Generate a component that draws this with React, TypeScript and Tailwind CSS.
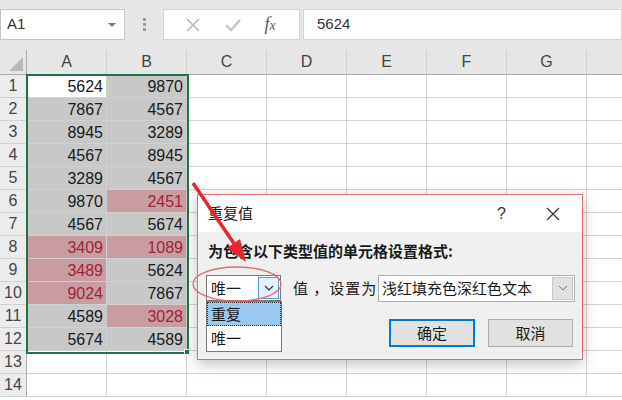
import React from 'react'

const colA = [5624, 7867, 8945, 4567, 3289, 9870, 4567, 3409, 3489, 9024, 4589, 5674]
const colB = [9870, 4567, 3289, 8945, 4567, 2451, 5674, 1089, 5624, 7867, 3028, 4589]
const pinkA = [7, 8, 9]
const pinkB = [5, 7, 10]
const letters = ['A', 'B', 'C', 'D', 'E', 'F', 'G']

const num = { fontFamily: '"Liberation Sans", Arial, sans-serif' }
const cjk = { fontFamily: '"Noto Sans CJK SC", "Noto Sans", sans-serif' }

function DataCell({ value, pink, active }: { value: number; pink: boolean; active?: boolean }) {
  const bg = active ? 'bg-white' : pink ? 'bg-[#c89ca1]' : 'bg-[#c8c8c8]'
  return (
    <div
      className={`h-[23px] border-r border-b border-[#d0d0d0] ${bg} ${pink ? 'text-[#9d2536]' : 'text-[#1a1a1a]'} text-right pr-[3px] text-[16px] leading-[23px]`}
      style={num}
    >
      {value}
    </div>
  )
}

export default function App() {
  const rows = Array.from({ length: 14 }, (_, i) => i)

  return (
    <div className="relative w-[622px] h-[400px] overflow-hidden bg-white select-none">
      {/* formula bar */}
      <div className="h-[50px] bg-[#e6e6e6] flex items-start pt-[9px]">
        <div className="w-[125px] h-[31px] bg-white border border-[#c6c6c6] flex items-center justify-between pl-[6px] pr-[8px]">
          <span className="text-[15px] text-[#333]" style={num}>A1</span>
          <span className="w-0 h-0 border-l-[4px] border-r-[4px] border-t-[4px] border-l-transparent border-r-transparent border-t-[#777]" />
        </div>
        <div className="w-[38px] h-[31px] flex flex-col items-center justify-center gap-[2px]">
          <span className="w-[3px] h-[3px] bg-[#9a9a9a]" />
          <span className="w-[3px] h-[3px] bg-[#9a9a9a]" />
          <span className="w-[3px] h-[3px] bg-[#9a9a9a]" />
        </div>
        <div className="w-[137px] h-[31px] bg-white border border-[#d4d4d4] flex items-center justify-around px-[10px]">
          <svg width="16" height="16" viewBox="0 0 16 16">
            <path d="M2 2 L14 14 M14 2 L2 14" stroke="#b8b8b8" strokeWidth="1.6" fill="none" />
          </svg>
          <svg width="18" height="16" viewBox="0 0 18 16">
            <path d="M2 8 L7 13 L16 3" stroke="#c4c4c4" strokeWidth="2.4" fill="none" />
          </svg>
          <span className="text-[18px] italic text-[#555] pr-[2px]" style={{ fontFamily: '"Liberation Serif", serif' }}>
            f<span className="text-[14px]">x</span>
          </span>
        </div>
        <div className="ml-[3px] flex-1 h-[31px] bg-white border border-[#d4d4d4] flex items-center pl-[13px]">
          <span className="text-[15px] text-[#333]" style={num}>5624</span>
        </div>
      </div>

      {/* sheet */}
      <div className="grid grid-cols-[27px_repeat(7,80px)_1fr]">
        {/* header corner */}
        <div className="h-[25px] bg-[#e6e6e6] border-r border-b border-[#ababab] flex items-end justify-end pr-[3px] pb-[3px]">
          <svg width="14" height="14" viewBox="0 0 14 14">
            <polygon points="14,0 14,14 0,14" fill="#b9b9b9" />
          </svg>
        </div>
        {letters.map((l) => (
          <div
            key={l}
            className="h-[25px] bg-[#e6e6e6] border-r border-b border-r-[#d0d0d0] border-b-[#ababab] flex items-center justify-center text-[16px] text-[#444]"
            style={num}
          >
            {l}
          </div>
        ))}
        <div className="h-[25px] bg-[#e6e6e6] border-b border-[#ababab]" />

        {rows.map((r) => (
          <React.Fragment key={r}>
            <div
              className="h-[23px] bg-[#ececec] border-r border-b border-r-[#ababab] border-b-[#d0d0d0] flex items-center justify-center text-[16px] text-[#444]"
              style={num}
            >
              {r + 1}
            </div>
            {r < 12 ? (
              <>
                <DataCell value={colA[r]} pink={pinkA.includes(r)} active={r === 0} />
                <DataCell value={colB[r]} pink={pinkB.includes(r)} />
              </>
            ) : (
              <>
                <div className="h-[23px] border-r border-b border-[#d4d4d4]" />
                <div className="h-[23px] border-r border-b border-[#d4d4d4]" />
              </>
            )}
            {[0, 1, 2, 3, 4].map((c) => (
              <div key={c} className="h-[23px] border-r border-b border-[#d4d4d4]" />
            ))}
            <div className="h-[23px] border-b border-[#d4d4d4]" />
          </React.Fragment>
        ))}
      </div>

      {/* selection outline */}
      <div className="absolute left-[26px] top-[74px] w-[163px] h-[280px] border-2 border-[#217346] pointer-events-none" />
      <div className="absolute left-[184px] top-[349px] w-[6px] h-[6px] bg-[#217346] border border-white" />

      {/* dialog */}
      <div className="absolute left-[197px] top-[194px] w-[386px] h-[166px] border border-[#e07070] bg-[#f0f0f0] shadow-[0_4px_14px_rgba(0,0,0,0.25)] flex flex-col" style={cjk}>
        <div className="h-[37px] bg-white flex items-center pl-[10px] pr-[22px]">
          <span className="text-[15px] text-[#1a1a1a]">重复值</span>
          <span className="ml-auto text-[16px] text-[#333] mr-[40px]" style={num}>?</span>
          <svg width="14" height="14" viewBox="0 0 14 14">
            <path d="M1 1 L13 13 M13 1 L1 13" stroke="#333" strokeWidth="1.2" fill="none" />
          </svg>
        </div>
        <div className="flex-1 flex flex-col pl-[8px] pr-[8px]">
          <div className="mt-[9px] pl-[2px] text-[15px] leading-[20px] font-bold text-[#1a1a1a]">为包含以下类型值的单元格设置格式:</div>
          <div className="mt-[14px] flex items-center h-[26px]">
            <div className="relative w-[75px] h-[26px] bg-white border border-[#7a7a7a] flex items-center">
              <span className="pl-[4px] text-[15px] text-[#1a1a1a]">唯一</span>
              <div className="ml-auto mr-[1px] w-[21px] h-[22px] border border-[#5a9bd5] bg-[#e5f1fb] flex items-center justify-center">
                <svg width="10" height="6" viewBox="0 0 10 6">
                  <path d="M1 1 L5 5 L9 1" stroke="#333" strokeWidth="1.2" fill="none" />
                </svg>
              </div>
              {/* open list */}
              <div className="absolute left-[-1px] top-[25px] w-[76px] h-[51px] bg-white border border-[#7a7a7a] flex flex-col z-10">
                <div className="h-[24px] bg-[#99c9ef] border border-dotted border-[#333] flex items-center pl-[3px] text-[15px] text-[#1a1a1a]">重复</div>
                <div className="h-[24px] flex items-center pl-[4px] text-[15px] text-[#1a1a1a]">唯一</div>
              </div>
            </div>
            <span className="ml-[12px] text-[15px] text-[#1a1a1a] tracking-[1px]">值 ，设置为</span>
            <div className="ml-auto mr-[-1px] w-[197px] h-[27px] bg-white border border-[#adadad] flex items-center">
              <span className="pl-[3px] text-[15px] text-[#1a1a1a]">浅红填充色深红色文本</span>
              <div className="ml-auto mr-[1px] w-[21px] h-[23px] bg-[#e1e1e1] border border-[#c8c8c8] flex items-center justify-center">
                <svg width="10" height="6" viewBox="0 0 10 6">
                  <path d="M1 1 L5 5 L9 1" stroke="#777" strokeWidth="1" fill="none" />
                </svg>
              </div>
            </div>
          </div>
          <div className="mt-[18px] flex justify-end gap-[13px] pr-[1px]">
            <button className="w-[86px] h-[28px] bg-[#e1e1e1] border-2 border-[#0078d7] text-[15px] text-[#1a1a1a]">确定</button>
            <button className="w-[85px] h-[28px] bg-[#e1e1e1] border border-[#adadad] text-[15px] text-[#1a1a1a]">取消</button>
          </div>
        </div>
      </div>

      {/* annotation: arrow and ellipse */}
      <svg className="absolute left-0 top-0 pointer-events-none" width="622" height="400" viewBox="0 0 622 400">
        <ellipse cx="237" cy="284" rx="44" ry="17" fill="none" stroke="#e06a6f" strokeWidth="1.3" />
        <line x1="193" y1="183" x2="235" y2="245" stroke="#e8262d" strokeWidth="3.5" />
        <polygon points="246,262 227,248 240,239" fill="#e8262d" />
      </svg>
    </div>
  )
}
